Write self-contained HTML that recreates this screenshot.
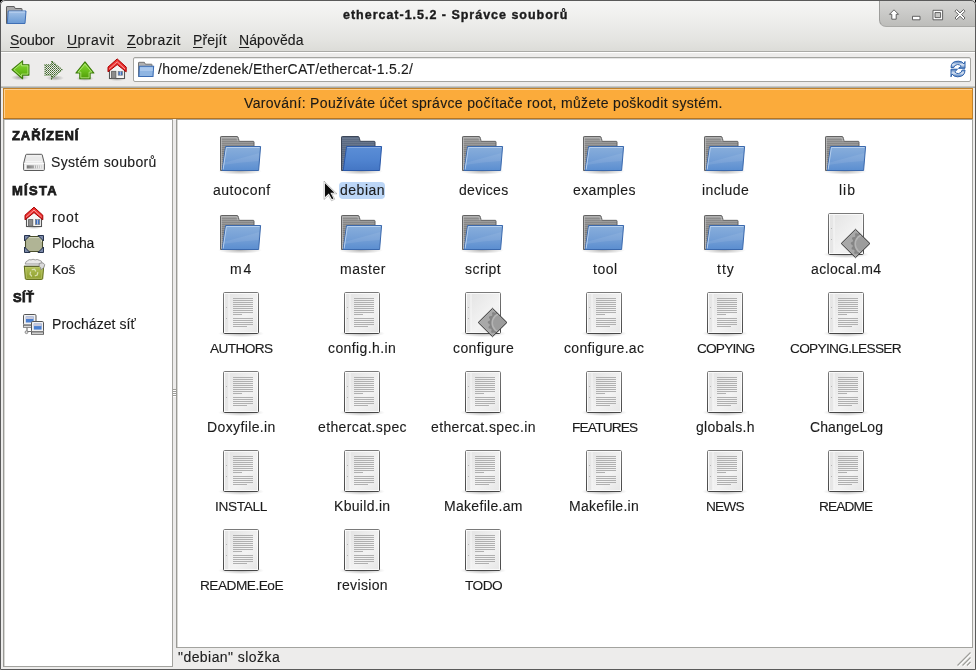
<!DOCTYPE html>
<html><head><meta charset="utf-8">
<style>
*{box-sizing:border-box}
html,body{margin:0;padding:0}
body{width:976px;height:670px;overflow:hidden;position:relative;background:#000;font-family:"Liberation Sans",sans-serif;color:#1b1b1b}
.t{position:absolute;white-space:nowrap;line-height:16px;will-change:transform;-webkit-text-stroke:0.12px currentColor}
.t u{text-decoration:underline;text-decoration-thickness:1px;text-underline-offset:2px}
.ic{position:absolute;overflow:visible}
.b{position:absolute}
.tb{-webkit-text-stroke:0.75px currentColor}
.tt{-webkit-text-stroke:0.4px currentColor}
.sel{position:absolute;background:#bcd6f6;border-radius:4px}
</style></head><body>
<svg width="0" height="0" style="position:absolute">
<defs>
  <linearGradient id="gBack" x1="0" y1="0" x2="0" y2="1">
    <stop offset="0" stop-color="#909090"/><stop offset="0.5" stop-color="#7c7c7c"/><stop offset="1" stop-color="#8c8c8c"/>
  </linearGradient>
  <linearGradient id="gFront" x1="0" y1="0" x2="0" y2="1">
    <stop offset="0" stop-color="#88aedb"/><stop offset="0.55" stop-color="#749fd6"/><stop offset="1" stop-color="#5b8ed0"/>
  </linearGradient>
  <linearGradient id="gBackS" x1="0" y1="0" x2="0" y2="1">
    <stop offset="0" stop-color="#5d6d86"/><stop offset="0.5" stop-color="#56657c"/><stop offset="1" stop-color="#617089"/>
  </linearGradient>
  <linearGradient id="gFrontS" x1="0" y1="0" x2="0" y2="1">
    <stop offset="0" stop-color="#5b8ed6"/><stop offset="0.55" stop-color="#5084d0"/><stop offset="1" stop-color="#4476c4"/>
  </linearGradient>
  <linearGradient id="gDoc" x1="0" y1="0" x2="1" y2="1">
    <stop offset="0" stop-color="#e2e2e2"/><stop offset="0.6" stop-color="#f3f3f3"/><stop offset="1" stop-color="#e6e6e6"/>
  </linearGradient>
  <linearGradient id="gDocB" x1="0" y1="0" x2="0" y2="1"><stop offset="0" stop-color="#7a7a7a"/><stop offset="1" stop-color="#474747"/></linearGradient>
  <radialGradient id="gShadow" cx="0.5" cy="0.5" r="0.5">
    <stop offset="0" stop-color="#000" stop-opacity="0.3"/><stop offset="1" stop-color="#000" stop-opacity="0"/>
  </radialGradient>
  <pattern id="stripe" width="2" height="2" patternUnits="userSpaceOnUse">
    <rect width="2" height="1" fill="#ffffff" fill-opacity="0.16"/>
  </pattern>
  <pattern id="dots" width="2" height="2" patternUnits="userSpaceOnUse">
    <rect x="0" y="0" width="1" height="1" fill="#3d6428"/><rect x="1" y="1" width="1" height="1" fill="#6f8a60"/>
  </pattern>

  <symbol id="folder" viewBox="0 0 48 48">
    <ellipse cx="23" cy="39.2" rx="22" ry="3.5" fill="url(#gShadow)"/>
    <path d="M3.5,38.5 V5.2 Q3.5,4.5 4.3,4.5 H20 Q20.8,4.5 21.1,5.3 L22.2,9.3 H36.2 Q37,9.3 37,10.1 V38.5 Z" fill="url(#gBack)" stroke="#636363" stroke-width="1"/>
    <rect x="4" y="6" width="32.5" height="32" fill="url(#stripe)"/>
    <path d="M4.5,38 V5.5 H19.8 L20.8,9.2" fill="none" stroke="#c4c4c4" stroke-width="0.8" stroke-opacity="0.8"/>
    <path d="M8.6,14.5 H43.6 L41.6,38.5 H5.2 Z" fill="url(#gFront)" stroke="#3b69ad" stroke-width="1"/>
    <path d="M6.1,37.5 L9.4,15.5 H42.5" fill="none" stroke="#b5cfee" stroke-width="1"/>
    <path d="M6,31 Q24,26 42.3,21 L41.5,29 Q24,30 6,33 Z" fill="#ffffff" fill-opacity="0.08"/>
  </symbol>
  <symbol id="folderSel" viewBox="0 0 48 48">
    <ellipse cx="23" cy="39.2" rx="22" ry="3.5" fill="url(#gShadow)"/>
    <path d="M3.5,38.5 V5.2 Q3.5,4.5 4.3,4.5 H20 Q20.8,4.5 21.1,5.3 L22.2,9.3 H36.2 Q37,9.3 37,10.1 V38.5 Z" fill="url(#gBackS)" stroke="#3c4658" stroke-width="1"/>
    <rect x="4" y="6" width="32.5" height="32" fill="url(#stripe)" opacity="0.55"/>
    <path d="M8.6,14.5 H43.6 L41.6,38.5 H5.2 Z" fill="url(#gFrontS)" stroke="#2a58a8" stroke-width="1"/>
    <path d="M9.4,15.5 H42.5" stroke="#86abe2" stroke-width="1"/>
  </symbol>
  <symbol id="docbase" viewBox="0 0 48 48">
    <ellipse cx="24" cy="43.5" rx="23" ry="3.6" fill="url(#gShadow)"/>
    <rect x="6.5" y="2.5" width="35" height="41" rx="1.2" fill="url(#gDoc)" stroke="url(#gDocB)" stroke-width="1"/>
    <rect x="7.5" y="3.5" width="33" height="39" fill="none" stroke="#fafafa" stroke-width="1"/>
    <rect x="8" y="4" width="3.5" height="38" fill="#e6e6e6"/>
    <rect x="11.5" y="4" width="1" height="38" fill="#f8f8f8"/>
    <rect x="9" y="17" width="1" height="1" fill="#b5b5b5"/>
    <rect x="9" y="28" width="1" height="1" fill="#b5b5b5"/>
  </symbol>
  <symbol id="doc" viewBox="0 0 48 48">
    <use href="#docbase"/>
    <g fill="#b0b0b0">
      <rect x="16" y="8" width="20" height="1"/><rect x="16" y="10" width="20" height="1"/>
      <rect x="16" y="12" width="20" height="1"/><rect x="16" y="14" width="20" height="1"/>
      <rect x="16" y="16" width="20" height="1"/><rect x="16" y="18" width="20" height="1"/>
      <rect x="16" y="20" width="20" height="1"/><rect x="16" y="22" width="20" height="1"/>
      <rect x="16" y="24" width="9" height="1"/>
      <rect x="16" y="28" width="20" height="1"/><rect x="16" y="30" width="20" height="1"/>
      <rect x="16" y="32" width="20" height="1"/><rect x="16" y="34" width="20" height="1"/>
      <rect x="16" y="36" width="14" height="1"/>
    </g>
  </symbol>
  <symbol id="exec" viewBox="0 0 48 48">
    <use href="#docbase"/>
    <clipPath id="dClip"><path d="M33.5,18.3 L47.9,32.5 L33.5,46.7 L19.2,32.5 Z"/></clipPath>
    <path d="M33.5,18.3 L47.9,32.5 L33.5,46.7 L19.2,32.5 Z" fill="#a8a8a8"/>
    <g clip-path="url(#dClip)">
      <path d="M57.20,33.00 L57.13,34.39 L55.16,35.42 L54.87,36.60 L56.12,38.43 L55.52,39.69 L53.31,39.89 L52.59,40.87 L53.04,43.04 L52.01,43.98 L49.89,43.31 L48.85,43.94 L48.43,46.12 L47.12,46.59 L45.42,45.16 L44.22,45.34 L43.00,47.20 L41.61,47.13 L40.58,45.16 L39.40,44.87 L37.57,46.12 L36.31,45.52 L36.11,43.31 L35.13,42.59 L32.96,43.04 L32.02,42.01 L32.69,39.89 L32.06,38.85 L29.88,38.43 L29.41,37.12 L30.84,35.42 L30.66,34.22 L28.80,33.00 L28.87,31.61 L30.84,30.58 L31.13,29.40 L29.88,27.57 L30.48,26.31 L32.69,26.11 L33.41,25.13 L32.96,22.96 L33.99,22.02 L36.11,22.69 L37.15,22.06 L37.57,19.88 L38.88,19.41 L40.58,20.84 L41.78,20.66 L43.00,18.80 L44.39,18.87 L45.42,20.84 L46.60,21.13 L48.43,19.88 L49.69,20.48 L49.89,22.69 L50.87,23.41 L53.04,22.96 L53.98,23.99 L53.31,26.11 L53.94,27.15 L56.12,27.57 L56.59,28.88 L55.16,30.58 L55.34,31.78 Z" fill="#858585"/>
      <circle cx="43.0" cy="33.0" r="10.6" fill="#b4b4b4"/>
      <circle cx="43.0" cy="33.0" r="9" fill="#9c9c9c"/>
    </g>
    <path d="M33.5,18.3 L47.9,32.5 L33.5,46.7 L19.2,32.5 Z" fill="none" stroke="#363636" stroke-width="1"/>
  </symbol>
</defs>
</svg>

<div class="b" style="left:0;top:0;width:976px;height:670px;background:#edeceb;border-radius:5px 5px 0 0"></div>
<!-- title bar + menubar gradient -->
<div class="b" style="left:0;top:0;width:976px;height:51px;border-radius:5px 5px 0 0;background:linear-gradient(#f6f6f5 0px,#efefed 18px,#e5e5e2 38px,#dcdcd8 51px)"></div>
<div class="b" style="left:0;top:51px;width:976px;height:1px;background:#aaaaa6"></div>
<div class="b" style="left:0;top:52px;width:976px;height:1px;background:#ffffff"></div>
<div class="b" style="left:0;top:86px;width:976px;height:1px;background:#c9c9c5"></div>
<div class="b" style="left:0;top:87px;width:976px;height:1px;background:#a9aba7"></div>

<!-- window buttons -->
<div class="b" style="left:879px;top:0;width:96px;height:27px;background:linear-gradient(#d6d6d4,#cacac8 50%,#bdbdba);border-left:1px solid #9d9d9b;border-bottom:1px solid #a9a9a6;border-radius:0 0 0 7px"></div>
<svg class="ic" style="left:879px;top:0" width="96" height="28">
  <g fill="#fff" stroke="#555" stroke-width="0.9" stroke-linejoin="round">
    <path d="M15,9.8 L19.5,14.3 L17.2,14.3 L17.2,19.2 L12.8,19.2 L12.8,14.3 L10.5,14.3 Z"/>
    <rect x="33.5" y="16.3" width="7.5" height="3.5"/>
    <path d="M54,10.3 H63.6 V19.8 H54 Z M56,12.6 V17.6 H61.6 V12.6 Z" fill-rule="evenodd"/>
    <path d="M76,11.2 L77.6,9.6 L81,13 L84.4,9.6 L86,11.2 L82.6,14.6 L86,18 L84.4,19.6 L81,16.2 L77.6,19.6 L76,18 L79.4,14.6 Z"/>
  </g>
</svg>

<!-- title folder icon -->
<svg class="ic" style="left:5px;top:5px" width="24" height="22" viewBox="0 0 24 22">
  <defs><linearGradient id="gTF" x1="0" y1="0" x2="0" y2="1"><stop offset="0" stop-color="#a3c2e8"/><stop offset="0.5" stop-color="#86aedd"/><stop offset="1" stop-color="#6b9bd6"/></linearGradient></defs>
  <path d="M1.5,18.5 V2 Q1.5,1.5 2,1.5 H9.2 L10.2,3.5 H16.5 Q17,3.5 17,4 V18.5 Z" fill="#a8a8a8" stroke="#5e5e5e"/>
  <path d="M3.2,6 H21 L20,18.5 H2.3 Z" fill="url(#gTF)" stroke="#3f6fb5"/>
  <path d="M4,7 H20" stroke="#c4d8f2"/>
</svg>
<!-- toolbar icons -->
<svg class="ic" style="left:8px;top:56px" width="26" height="26" viewBox="0 0 26 26">
  <ellipse cx="12" cy="21.5" rx="9" ry="2.8" fill="url(#gShadow)"/>
  <defs><linearGradient id="gG" x1="0" y1="0" x2="0" y2="1"><stop offset="0" stop-color="#8fdb3f"/><stop offset="0.5" stop-color="#6cc11c"/><stop offset="1" stop-color="#4e9a06"/></linearGradient></defs>
  <path d="M4,13.7 L14.6,4.9 V8.8 H20.9 V19.1 H14.6 V22.8 Z" fill="url(#gG)" stroke="#3b7a0a" stroke-width="1.1" stroke-linejoin="round"/>
  <path d="M5.9,13.7 L13.6,7.2 V9.8 H19.9 V18.1 H13.6 V20.5 Z" fill="none" stroke="#c0ef8a" stroke-width="0.9" stroke-opacity="0.85"/>
</svg>
<svg class="ic" style="left:40px;top:56px" width="26" height="26" viewBox="0 0 26 26">
  <ellipse cx="15" cy="22" rx="9" ry="2.8" fill="url(#gShadow)"/>
  <path d="M22,13.7 L11.6,4.9 V8.8 H5 V19.1 H11.6 V22.8 Z" fill="url(#dots)"/>
  <path d="M22,13.7 L11.6,4.9 V8.8 H5 V19.1 H11.6 V22.8 Z" fill="none" stroke="#3a6a22" stroke-width="1.1" stroke-dasharray="1 1"/>
</svg>
<svg class="ic" style="left:72px;top:56px" width="26" height="26" viewBox="0 0 26 26">
  <ellipse cx="13" cy="22.5" rx="9" ry="2.5" fill="url(#gShadow)"/>
  <path d="M13,5.9 L21.9,17 H18.1 V22.8 H7.8 V17 H3.9 Z" fill="url(#gG)" stroke="#3b7a0a" stroke-width="1.1" stroke-linejoin="round"/>
  <path d="M13,8.1 L19.7,16.1 H17.1 V21.8 H8.8 V16.1 H6.1 Z" fill="none" stroke="#c0ef8a" stroke-width="0.9" stroke-opacity="0.85"/>
</svg>
<svg class="ic" style="left:104px;top:55px" width="26" height="26" viewBox="0 0 26 26">
  <ellipse cx="13" cy="24" rx="9" ry="2" fill="url(#gShadow)"/>
  <path d="M5.5,14.5 L13,8 L20.5,14.5 V23.5 H5.5 Z" fill="#f5f5f5" stroke="#555" stroke-width="1.1"/>
  <rect x="7.6" y="16.3" width="4.3" height="7" fill="#8c8c8c" stroke="#5c5c5c" stroke-width="0.8"/>
  <rect x="14.2" y="16.4" width="4.3" height="3.8" fill="#3d6fc4" stroke="#7a7a7a" stroke-width="0.7"/>
  <path d="M16.35,16.4 V20.2" stroke="#e8e8e8" stroke-width="0.7"/>
  <path d="M4,12.1 L13.2,3.9 L22.2,12.1 V16.8 L13.2,9.6 L4,16.8 Z" fill="#ef2f2f" stroke="#a50000" stroke-width="1" stroke-linejoin="miter"/>
  <path d="M5.2,14 L13.2,6.8 L21,14" fill="none" stroke="#f7a0a0" stroke-width="1"/>
</svg>
<!-- location entry -->
<div class="b" style="left:133px;top:57px;width:838px;height:25px;background:#fff;border:1px solid #a5a5a1;border-radius:2px;box-shadow:inset 0 1px 0 #e6e6e6"></div>
<svg class="ic" style="left:136px;top:60px" width="20" height="20" viewBox="0 0 20 20">
  <path d="M2.5,16.5 V2.8 Q2.5,2.3 3,2.3 H8.4 L9.4,4.2 H15.5 Q16,4.2 16,4.7 V16.5 Z" fill="#b0b0b0" stroke="#6b6b6b" stroke-width="0.9"/>
  <path d="M3.3,6.3 H17.6 L17,16.5 H2.9 Z" fill="#8fb5e2" stroke="#3c6db4" stroke-width="1.1"/>
  <path d="M4,7.3 H16.8 V11 H4 Z" fill="#a9c7ec"/>
</svg>
<svg class="ic" style="left:948px;top:58px" width="20" height="22" viewBox="0 0 20 22">
  <defs><linearGradient id="gR" x1="0" y1="0" x2="0" y2="1"><stop offset="0" stop-color="#3d6fb3"/><stop offset="0.5" stop-color="#dfe9f6"/><stop offset="1" stop-color="#3d6fb3"/></linearGradient></defs>
  <path d="M3,9.5 Q3,3 10.5,3.2 Q14.5,3.3 16,6 L17,3.5 V10.3 H10.5 L13.2,8.3 Q11.5,6.3 9.5,6.5 Q6.2,7 5.8,9.5 Z" fill="url(#gR)" stroke="#2f62ab" stroke-width="1"/>
  <path d="M17,12 Q17,18.8 9.5,18.8 Q5.5,18.6 4,16 L3,18.8 V11.2 H9.5 L6.8,13.8 Q8.5,15.8 10.5,15.6 Q13.8,15 14.2,12 Z" fill="url(#gR)" stroke="#2f62ab" stroke-width="1"/>
</svg>

<!-- warning bar -->
<div class="b" style="left:3px;top:88px;width:970px;height:31px;background:#fbab3b;border:1px solid #c2822a;border-bottom-color:#b77520;box-shadow:inset 1px 1px 0 #fdcf8f"></div>

<!-- sidebar -->
<div class="b" style="left:3px;top:119px;width:170px;height:548px;background:#fff;border:1px solid #a3a39f;border-left-color:#9a9a96;box-shadow:inset 1px 0 0 #d8d8d4"></div>
<!-- splitter grip -->
<div class="b" style="left:173px;top:389px;width:3px;height:1px;background:#9e9e9a"></div>
<div class="b" style="left:173px;top:391px;width:3px;height:1px;background:#9e9e9a"></div>
<div class="b" style="left:173px;top:393px;width:3px;height:1px;background:#9e9e9a"></div>
<div class="b" style="left:173px;top:395px;width:3px;height:1px;background:#9e9e9a"></div>
<div class="b" style="left:173px;top:390px;width:3px;height:1px;background:#ffffff"></div>
<div class="b" style="left:173px;top:392px;width:3px;height:1px;background:#ffffff"></div>
<div class="b" style="left:173px;top:394px;width:3px;height:1px;background:#ffffff"></div>
<div class="b" style="left:173px;top:396px;width:3px;height:1px;background:#ffffff"></div>

<!-- icon view -->
<div class="b" style="left:176px;top:119px;width:797px;height:529px;background:#fff;border:1px solid #a3a39f;border-left-color:#9a9a96;box-shadow:inset 1px 0 0 #d8d8d4"></div>

<!-- sidebar icons -->
<svg class="ic" style="left:22px;top:152px" width="24" height="20" viewBox="0 0 24 20">
  <defs><linearGradient id="gDr" x1="0" y1="0" x2="1" y2="0"><stop offset="0" stop-color="#777"/><stop offset="0.6" stop-color="#b5b5b5"/><stop offset="1" stop-color="#d8d8d8"/></linearGradient></defs>
  <path d="M3.8,2.8 Q4,2.3 4.6,2.3 H19.4 Q20,2.3 20.2,2.8 L22.4,11.5 V17.5 Q22.4,18.5 21.4,18.5 H2.6 Q1.6,18.5 1.6,17.5 V11.5 Z" fill="#e9e9e9" stroke="#5a5a5a" stroke-width="1"/>
  <path d="M2.1,11.6 H21.9" stroke="#fafafa" stroke-width="1.2"/>
  <path d="M4.5,4 Q12,3.5 19.5,4 M4,9.5 H20" stroke="#f8f8f8" stroke-width="0.8" fill="none"/>
  <rect x="4.8" y="13.3" width="15.2" height="3.2" fill="url(#gDr)"/>
  <path d="M12.5,13.3 V16.5 M14.5,13.3 V16.5 M16.5,13.3 V16.5 M18.5,13.3 V16.5" stroke="#f2f2f2" stroke-width="0.8"/>
  <path d="M3.3,13 V17" stroke="#fff" stroke-width="0.8"/>
</svg>
<svg class="ic" style="left:22px;top:205px" width="24" height="24" viewBox="0 0 24 24">
  <ellipse cx="12" cy="22" rx="9" ry="2" fill="url(#gShadow)"/>
  <path d="M4.5,13 L12,6.5 L19.5,13 V21.5 H4.5 Z" fill="#f5f5f5" stroke="#555" stroke-width="1.1"/>
  <rect x="6.6" y="14.6" width="4.2" height="6.6" fill="#8c8c8c" stroke="#5c5c5c" stroke-width="0.8"/>
  <rect x="13.4" y="14.6" width="4.3" height="4.9" fill="#3d6fc4" stroke="#7a7a7a" stroke-width="0.7"/>
  <path d="M15.55,14.6 V19.5" stroke="#e8e8e8" stroke-width="0.7"/>
  <path d="M3,10.2 L12,2.2 L20.8,10.2 V14.8 L12,7.6 L3,14.8 Z" fill="#ef2f2f" stroke="#a50000" stroke-width="1"/>
  <path d="M4.2,12 L12,5 L19.6,12" fill="none" stroke="#f7a0a0" stroke-width="1"/>
</svg>
<svg class="ic" style="left:22px;top:232px" width="24" height="24" viewBox="0 0 24 24">
  <path d="M6,4.5 H18 L20.5,7 V17 L18,19.5 H6 L3.5,17 V7 Z" fill="#b0b495" stroke="#4b4f2c" stroke-width="1.1"/>
  <path d="M6.5,5.6 H17.5 L19.4,7.5 V10" fill="none" stroke="#d8dbc4" stroke-width="0.9"/>
  <path d="M2.5,3.5 H8 L2.5,9 Z M21.5,3.5 H16 L21.5,9 Z M2.5,20.5 H8 L2.5,15 Z M21.5,20.5 H16 L21.5,15 Z" fill="#7a88a8" stroke="#27344f" stroke-width="1" stroke-linejoin="round"/>
</svg>
<svg class="ic" style="left:22px;top:257px" width="24" height="24" viewBox="0 0 24 24">
  <defs><linearGradient id="gTr" x1="0" y1="0" x2="0" y2="1"><stop offset="0" stop-color="#b4c35a"/><stop offset="1" stop-color="#8d9d2c"/></linearGradient></defs>
  <path d="M2.3,9 H21.7 L20.7,21.5 Q20.6,22.4 19.7,22.4 H4.3 Q3.4,22.4 3.3,21.5 Z" fill="url(#gTr)" stroke="#5d6b12" stroke-width="1"/>
  <path d="M3.6,10.2 H20.4 L19.5,21.3 H4.5 Z" fill="none" stroke="#cbd78a" stroke-width="0.7" stroke-opacity="0.7"/>
  <path d="M2.6,6.6 H19.5 V9 H2.6 Z" fill="#f4f4f4"/>
  <path d="M2.4,9.2 H19" stroke="#474d2a" stroke-width="1"/>
  <path d="M3.2,7 Q3.4,4.2 5.8,3.6 Q7,2 9,2.9 Q11,1.6 13.2,2.9 Q15.2,1.9 17.2,3.2 Q19.8,3.4 20.2,6.2 L19.6,7 Z" fill="#e8e8e8" stroke="#8a8a8a" stroke-width="0.8"/>
  <path d="M17.2,6.5 Q21.4,4.8 22.8,7.8 Q22.6,11.2 18.8,12.8 Q19.4,10.2 17.2,9.2 Z" fill="#dadada" stroke="#858585" stroke-width="0.8"/>
  <path d="M10.2,12.6 L12.6,12.2 L13.6,14 M15.8,15.5 L15.2,18 L13.2,18.8 M9.6,19 L8,17.2 L8.6,15" fill="none" stroke="#d8e0ae" stroke-width="1.2" stroke-linecap="round"/>
</svg>
<svg class="ic" style="left:22px;top:312px" width="24" height="24" viewBox="0 0 24 24">
  <rect x="1.5" y="2.5" width="12.5" height="10.5" rx="1.2" fill="#f2f2f2" stroke="#555" stroke-width="1"/>
  <rect x="3.8" y="4.5" width="7.8" height="6" fill="#4a7fd0"/>
  <rect x="3.8" y="4.5" width="7.8" height="2.5" fill="#c8c8d8"/>
  <rect x="1.5" y="13.3" width="12.5" height="2" fill="#e6e6e6" stroke="#666" stroke-width="0.8"/>
  <path d="M5,15.5 V19 M4,19.5 H9" stroke="#777" stroke-width="1.2"/>
  <circle cx="4.5" cy="20.2" r="1.4" fill="#ddd" stroke="#777" stroke-width="0.8"/>
  <rect x="9.5" y="9.5" width="12" height="10.5" rx="1.2" fill="#f2f2f2" stroke="#555" stroke-width="1"/>
  <rect x="11.8" y="11.6" width="7.8" height="6" fill="#4a7fd0"/>
  <rect x="11.8" y="11.6" width="7.8" height="2.5" fill="#c8c8d8"/>
  <rect x="9.5" y="20" width="12" height="2.3" fill="#e6e6e6" stroke="#555" stroke-width="0.9"/>
</svg>

<div class="t tt" style="left:343.00px;top:6.87px;font-size:12.5px;font-weight:bold;letter-spacing:0.984px;text-shadow:0 0 2px #fff,0 0 1px #fff">ethercat-1.5.2 - Správce souborů</div>
<div class="t" style="left:9.50px;top:32.15px;font-size:14px;letter-spacing:-0.097px"><u>S</u>oubor</div>
<div class="t" style="left:66.50px;top:32.15px;font-size:14px;letter-spacing:0.482px"><u>U</u>pravit</div>
<div class="t" style="left:126.50px;top:32.15px;font-size:14px;letter-spacing:0.411px"><u>Z</u>obrazit</div>
<div class="t" style="left:192.50px;top:32.15px;font-size:14px;letter-spacing:0.172px"><u>P</u>řejít</div>
<div class="t" style="left:238.50px;top:32.15px;font-size:14px;letter-spacing:0.093px"><u>N</u>ápověda</div>
<div class="t" style="left:157.50px;top:61.35px;font-size:14px;font-weight:normal;letter-spacing:0.237px;">/home/zdenek/EtherCAT/ethercat-1.5.2/</div>
<div class="t" style="left:244.00px;top:95.35px;font-size:14px;font-weight:normal;letter-spacing:0.334px;color:#1c1a16">Varování: Používáte účet správce počítače root, můžete poškodit systém.</div>
<div class="t tb" style="left:12.00px;top:127.70px;font-size:13px;font-weight:bold;letter-spacing:0.924px;">ZAŘÍZENÍ</div>
<div class="t" style="left:51.00px;top:154.35px;font-size:14px;font-weight:normal;letter-spacing:0.314px;">Systém souborů</div>
<div class="t tb" style="left:11.50px;top:182.70px;font-size:13px;font-weight:bold;letter-spacing:1.269px;">MÍSTA</div>
<div class="t" style="left:52.00px;top:209.35px;font-size:14px;font-weight:normal;letter-spacing:0.722px;">root</div>
<div class="t" style="left:52.00px;top:235.35px;font-size:14px;font-weight:normal;letter-spacing:-0.088px;">Plocha</div>
<div class="t" style="left:52.00px;top:262.15px;font-size:13.7px;font-weight:normal;letter-spacing:-0.173px;">Koš</div>
<div class="t tb" style="left:13.00px;top:289.70px;font-size:13px;font-weight:bold;letter-spacing:0.403px;">SÍŤ</div>
<div class="t" style="left:52.00px;top:315.85px;font-size:14px;font-weight:normal;letter-spacing:0.059px;">Procházet síť</div>
<div class="t" style="left:178.00px;top:648.85px;font-size:14px;font-weight:normal;letter-spacing:0.440px;">"debian" složka</div>
<svg class="ic" style="left:217px;top:132px" width="48" height="48"><use href="#folder"/></svg>
<div class="t" style="left:212.92px;top:182.35px;font-size:14px;font-weight:normal;letter-spacing:0.491px;">autoconf</div>
<svg class="ic" style="left:338px;top:132px" width="48" height="48"><use href="#folderSel"/></svg>
<div class="sel" style="left:339px;top:182px;width:46px;height:17px"></div>
<div class="t" style="left:339.84px;top:182.35px;font-size:14px;font-weight:normal;letter-spacing:0.523px;">debian</div>
<svg class="ic" style="left:459px;top:132px" width="48" height="48"><use href="#folder"/></svg>
<div class="t" style="left:458.77px;top:182.35px;font-size:14px;font-weight:normal;letter-spacing:0.286px;">devices</div>
<svg class="ic" style="left:580px;top:132px" width="48" height="48"><use href="#folder"/></svg>
<div class="t" style="left:573.15px;top:182.35px;font-size:14px;font-weight:normal;letter-spacing:0.352px;">examples</div>
<svg class="ic" style="left:701px;top:132px" width="48" height="48"><use href="#folder"/></svg>
<div class="t" style="left:701.96px;top:182.35px;font-size:14px;font-weight:normal;letter-spacing:0.391px;">include</div>
<svg class="ic" style="left:822px;top:132px" width="48" height="48"><use href="#folder"/></svg>
<div class="t" style="left:838.77px;top:182.35px;font-size:14px;font-weight:normal;letter-spacing:0.990px;">lib</div>
<svg class="ic" style="left:217px;top:211px" width="48" height="48"><use href="#folder"/></svg>
<div class="t" style="left:230.04px;top:261.35px;font-size:14px;font-weight:normal;letter-spacing:1.742px;">m4</div>
<svg class="ic" style="left:338px;top:211px" width="48" height="48"><use href="#folder"/></svg>
<div class="t" style="left:339.59px;top:261.35px;font-size:14px;font-weight:normal;letter-spacing:0.510px;">master</div>
<svg class="ic" style="left:459px;top:211px" width="48" height="48"><use href="#folder"/></svg>
<div class="t" style="left:465.40px;top:261.35px;font-size:14px;font-weight:normal;letter-spacing:0.461px;">script</div>
<svg class="ic" style="left:580px;top:211px" width="48" height="48"><use href="#folder"/></svg>
<div class="t" style="left:593.20px;top:261.35px;font-size:14px;font-weight:normal;letter-spacing:0.512px;">tool</div>
<svg class="ic" style="left:701px;top:211px" width="48" height="48"><use href="#folder"/></svg>
<div class="t" style="left:716.56px;top:261.35px;font-size:14px;font-weight:normal;letter-spacing:1.031px;">tty</div>
<svg class="ic" style="left:822px;top:211px" width="48" height="48"><use href="#exec"/></svg>
<div class="t" style="left:811.28px;top:261.35px;font-size:14px;font-weight:normal;letter-spacing:0.355px;">aclocal.m4</div>
<svg class="ic" style="left:217px;top:290px" width="48" height="48"><use href="#doc"/></svg>
<div class="t" style="left:210.18px;top:341.15px;font-size:13.7px;font-weight:normal;letter-spacing:-0.635px;">AUTHORS</div>
<svg class="ic" style="left:338px;top:290px" width="48" height="48"><use href="#doc"/></svg>
<div class="t" style="left:328.45px;top:340.35px;font-size:14px;font-weight:normal;letter-spacing:0.391px;">config.h.in</div>
<svg class="ic" style="left:459px;top:290px" width="48" height="48"><use href="#exec"/></svg>
<div class="t" style="left:452.97px;top:340.35px;font-size:14px;font-weight:normal;letter-spacing:0.389px;">configure</div>
<svg class="ic" style="left:580px;top:290px" width="48" height="48"><use href="#doc"/></svg>
<div class="t" style="left:564.35px;top:340.35px;font-size:14px;font-weight:normal;letter-spacing:0.339px;">configure.ac</div>
<svg class="ic" style="left:701px;top:290px" width="48" height="48"><use href="#doc"/></svg>
<div class="t" style="left:696.78px;top:341.15px;font-size:13.7px;font-weight:normal;letter-spacing:-0.834px;">COPYING</div>
<svg class="ic" style="left:822px;top:290px" width="48" height="48"><use href="#doc"/></svg>
<div class="t" style="left:790.11px;top:341.15px;font-size:13.7px;font-weight:normal;letter-spacing:-0.713px;">COPYING.LESSER</div>
<svg class="ic" style="left:217px;top:369px" width="48" height="48"><use href="#doc"/></svg>
<div class="t" style="left:207.15px;top:419.35px;font-size:14px;font-weight:normal;letter-spacing:0.376px;">Doxyfile.in</div>
<svg class="ic" style="left:338px;top:369px" width="48" height="48"><use href="#doc"/></svg>
<div class="t" style="left:318.06px;top:419.35px;font-size:14px;font-weight:normal;letter-spacing:0.374px;">ethercat.spec</div>
<svg class="ic" style="left:459px;top:369px" width="48" height="48"><use href="#doc"/></svg>
<div class="t" style="left:431.08px;top:419.35px;font-size:14px;font-weight:normal;letter-spacing:0.378px;">ethercat.spec.in</div>
<svg class="ic" style="left:580px;top:369px" width="48" height="48"><use href="#doc"/></svg>
<div class="t" style="left:571.73px;top:420.15px;font-size:13.7px;font-weight:normal;letter-spacing:-0.824px;">FEATURES</div>
<svg class="ic" style="left:701px;top:369px" width="48" height="48"><use href="#doc"/></svg>
<div class="t" style="left:696.12px;top:419.35px;font-size:14px;font-weight:normal;letter-spacing:0.306px;">globals.h</div>
<svg class="ic" style="left:822px;top:369px" width="48" height="48"><use href="#doc"/></svg>
<div class="t" style="left:810.01px;top:419.35px;font-size:14px;font-weight:normal;letter-spacing:0.069px;">ChangeLog</div>
<svg class="ic" style="left:217px;top:448px" width="48" height="48"><use href="#doc"/></svg>
<div class="t" style="left:215.45px;top:499.15px;font-size:13.7px;font-weight:normal;letter-spacing:-0.342px;">INSTALL</div>
<svg class="ic" style="left:338px;top:448px" width="48" height="48"><use href="#doc"/></svg>
<div class="t" style="left:334.27px;top:498.35px;font-size:14px;font-weight:normal;letter-spacing:0.307px;">Kbuild.in</div>
<svg class="ic" style="left:459px;top:448px" width="48" height="48"><use href="#doc"/></svg>
<div class="t" style="left:444.10px;top:498.35px;font-size:14px;font-weight:normal;letter-spacing:0.305px;">Makefile.am</div>
<svg class="ic" style="left:580px;top:448px" width="48" height="48"><use href="#doc"/></svg>
<div class="t" style="left:569.49px;top:498.35px;font-size:14px;font-weight:normal;letter-spacing:0.284px;">Makefile.in</div>
<svg class="ic" style="left:701px;top:448px" width="48" height="48"><use href="#doc"/></svg>
<div class="t" style="left:705.98px;top:499.15px;font-size:13.7px;font-weight:normal;letter-spacing:-0.837px;">NEWS</div>
<svg class="ic" style="left:822px;top:448px" width="48" height="48"><use href="#doc"/></svg>
<div class="t" style="left:818.70px;top:499.15px;font-size:13.7px;font-weight:normal;letter-spacing:-0.895px;">README</div>
<svg class="ic" style="left:217px;top:527px" width="48" height="48"><use href="#doc"/></svg>
<div class="t" style="left:199.95px;top:578.15px;font-size:13.7px;font-weight:normal;letter-spacing:-0.522px;">README.EoE</div>
<svg class="ic" style="left:338px;top:527px" width="48" height="48"><use href="#doc"/></svg>
<div class="t" style="left:337.04px;top:577.35px;font-size:14px;font-weight:normal;letter-spacing:0.338px;">revision</div>
<svg class="ic" style="left:459px;top:527px" width="48" height="48"><use href="#doc"/></svg>
<div class="t" style="left:465.29px;top:578.15px;font-size:13.7px;font-weight:normal;letter-spacing:-0.548px;">TODO</div>
<!-- resize grip -->
<svg class="ic" style="left:955px;top:650px" width="18" height="18" viewBox="0 0 18 18">
  <path d="M2.5,15.5 L15.5,2.5 M7.5,15.5 L15.5,7.5 M12,15.5 L15.5,12" stroke="#fff" stroke-width="1.2" transform="translate(0.8,0.8)"/>
  <path d="M2.5,15.5 L15.5,2.5 M7.5,15.5 L15.5,7.5 M12,15.5 L15.5,12" stroke="#9d9d99" stroke-width="1.2"/>
</svg>
<!-- cursor -->
<svg class="ic" style="left:322px;top:179px" width="20" height="24" viewBox="0 0 20 24">
  <path d="M2,2 V20.5 L6.5,16.5 L9.5,21.8 L12.8,20.2 L9.8,14.8 H15 Z" fill="#fff" stroke="#000" stroke-opacity="0.28" stroke-width="0.8" stroke-linejoin="round"/>
  <path d="M3,4.3 V18 L6.8,14.5 L10,20.2 L11.4,19.5 L8.4,13.8 H12.5 Z" fill="#0d0d0d"/>
</svg>
<!-- window frame -->
<div class="b" style="left:0;top:0;width:976px;height:670px;border:1px solid #5a5a5a;border-radius:5px 5px 0 0;pointer-events:none"></div>
</body></html>
